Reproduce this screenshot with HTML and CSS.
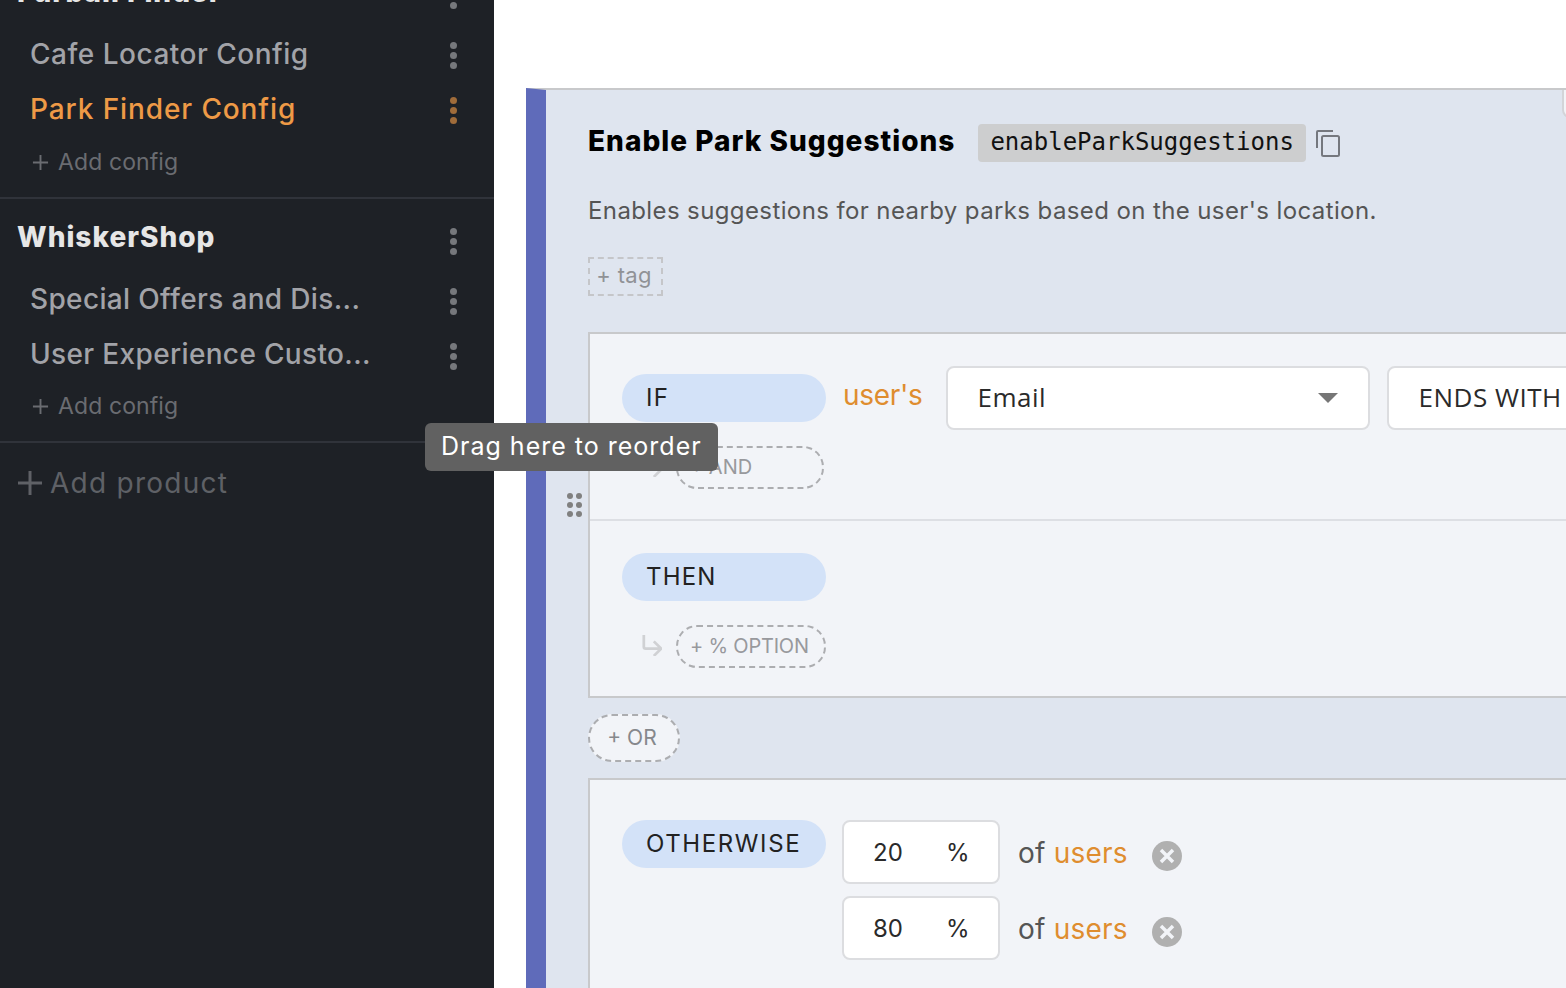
FILE: index.html
```html
<!DOCTYPE html>
<html lang="en">
<head>
<meta charset="utf-8">
<title>Enable Park Suggestions</title>
<link rel="stylesheet" href="styles.css">
</head>
<body>
<div class="page">
  <aside class="sidebar">
    <section class="product">
      <div class="product-head"><h2 class="product-name">Furball Finder</h2><span class="kebab"><i></i><i></i><i></i></span></div>
      <div class="config"><span class="config-name">Cafe Locator Config</span><span class="kebab"><i></i><i></i><i></i></span></div>
      <div class="config active"><span class="config-name">Park Finder Config</span><span class="kebab"><i></i><i></i><i></i></span></div>
      <div class="add-config"><svg class="plus-sm" viewBox="0 0 18 18"><path d="M9 1v16M1 9h16"/></svg>Add config</div>
    </section>
    <section class="product">
      <div class="product-head"><h2 class="product-name">WhiskerShop</h2><span class="kebab"><i></i><i></i><i></i></span></div>
      <div class="config tight"><span class="config-name">Special Offers and Dis...</span><span class="kebab"><i></i><i></i><i></i></span></div>
      <div class="config tight"><span class="config-name">User Experience Custo...</span><span class="kebab"><i></i><i></i><i></i></span></div>
      <div class="add-config"><svg class="plus-sm" viewBox="0 0 18 18"><path d="M9 1v16M1 9h16"/></svg>Add config</div>
    </section>
    <div class="add-product"><svg class="plus-lg" viewBox="0 0 24 24"><path d="M12 0v24M0 12h24"/></svg>Add product</div>
  </aside>
  <main class="main">
    <article class="card">
      <div class="card-body">
        <header class="title-row">
          <h1 class="title">Enable Park Suggestions</h1>
          <code class="key">enableParkSuggestions</code>
          <svg class="copy" viewBox="0 0 24 27"><path d="M1 18V2a1 1 0 0 1 1-1h15"/><rect x="6" y="6" width="17" height="20" rx="1.500"/></svg>
        </header>
        <p class="desc">Enables suggestions for nearby parks based on the user's location.</p>
        <div class="tag">+ tag</div>
        <div class="rule-box">
          <div class="rule-part if-part">
            <div class="rule-line">
              <span class="pill">IF</span>
              <span class="users">user's</span>
              <div class="field attr"><span class="field-text">Email</span><span class="caret"></span></div>
              <div class="field op"><span class="field-text">ENDS WITH</span></div>
            </div>
            <div class="sub-line"><svg class="arrow" viewBox="0 0 22 24"><path d="M2 1v13a2 2 0 0 0 2 2h16M13 8l8 8-8 8"/></svg><span class="dash-pill and">+ AND</span></div>
          </div>
          <div class="rule-part then-part">
            <span class="pill">THEN</span>
            <div class="sub-line"><svg class="arrow" viewBox="0 0 22 24"><path d="M2 1v13a2 2 0 0 0 2 2h16M13 8l8 8-8 8"/></svg><span class="dash-pill option">+ % OPTION</span></div>
          </div>
        </div>
        <div class="or-row"><span class="dash-pill or">+ OR</span></div>
        <div class="rule-box otherwise">
          <span class="pill wide">OTHERWISE</span>
          <div class="split">
            <div class="split-row">
              <div class="field pct"><span class="num">20</span><span>%</span></div>
              <span class="of">of <em>users</em></span>
              <svg class="remove" viewBox="0 0 30 30"><circle cx="15" cy="15" r="15"/><path d="M9 9l12 12M21 9L9 21"/></svg>
            </div>
            <div class="split-row">
              <div class="field pct"><span class="num">80</span><span>%</span></div>
              <span class="of">of <em>users</em></span>
              <svg class="remove" viewBox="0 0 30 30"><circle cx="15" cy="15" r="15"/><path d="M9 9l12 12M21 9L9 21"/></svg>
            </div>
          </div>
        </div>
      </div>
      <span class="corner"></span>
    </article>
    <span class="grip"><i></i><i></i><i></i><i></i><i></i><i></i></span>
  </main>
  <div class="tooltip">Drag here to reorder</div>
</div>
</body>
</html>
```
FILE: styles.css
```css
* { box-sizing: border-box; }
html, body { margin: 0; padding: 0; }
body { background: #fff; font-family: Inter, "Noto Sans", sans-serif; overflow: hidden; }
.page { position: relative; display: flex; width: 1566px; height: 988px; overflow: hidden; }

.sidebar { width: 494px; flex: none; background: #1e2126; color: #a2a3a8; margin-top: -24px; height: 1012px; }
.product { border-bottom: 2px solid #30333a; padding: 0 0 15px; }
.product-head { display: flex; justify-content: space-between; align-items: center; height: 38px; padding: 0 37px 0 17px; }
.product-name { margin: 0; padding-bottom: 8px; font-size: 28px; line-height: 38px; font-weight: 800; color: #e6e6e6; letter-spacing: 1px; white-space: nowrap; }
.product:first-child .product-name { padding-bottom: 6px; }
.product + .product .product-head { margin-top: 23px; }
.config { display: flex; justify-content: space-between; align-items: center; height: 55px; padding: 0 37px 0 30px; font-size: 28px; font-weight: 500; letter-spacing: .5px; }
.config-name { padding-bottom: 4px; }
.config.tight { letter-spacing: .35px; }
.config.tight .config-name { padding-bottom: 6px; }
.product-head + .config { margin-top: 14px; }
.config.active { color: #ee9a46; letter-spacing: .9px; }
.config.active .kebab i { background: #a06c3a; }
.kebab { display: flex; flex-direction: column; gap: 3px; flex: none; }
.kebab i { display: block; width: 7px; height: 7px; border-radius: 50%; background: #76787c; }
.add-config { display: flex; align-items: center; gap: 9px; height: 40px; padding-left: 32px; font-size: 23px; letter-spacing: .1px; color: #6a6c71; margin-top: 4px; }
.product + .product .add-config { margin-top: 2px; }
.plus-sm { width: 17px; height: 17px; fill: none; stroke: #6a6c71; stroke-width: 2; }
.add-product { display: flex; align-items: center; gap: 8px; padding: 23px 0 0 18px; font-size: 28px; letter-spacing: 1.25px; color: #5f6166; }
.plus-lg { width: 24px; height: 24px; fill: none; stroke: #5f6166; stroke-width: 3; }

.main { flex: 1; min-width: 0; position: relative; padding: 88px 0 0 32px; }
.card { position: relative; width: 1100px; height: 1000px; background: #dfe5ef; border-top: 2px solid #c8c9cb; border-left: 20px solid #5f6bba; }
.card-body { padding: 34px 0 0 42px; }
.corner { position: absolute; top: 0; left: 1016px; width: 24px; height: 28px; background: #f2f4f8; border: 2px solid #d3d4d8; border-top: 0; border-radius: 0 0 0 8px; }
.title-row { display: flex; align-items: center; height: 38px; }
.title { margin: 0; padding-bottom: 4px; font-size: 28px; line-height: 38px; font-weight: 800; color: #000; letter-spacing: 1.02px; white-space: nowrap; }
.key { margin-left: 23px; padding: 0 12px; height: 38px; line-height: 36px; background: #cdcecf; border-radius: 4px; font-family: "DejaVu Sans Mono", monospace; font-size: 24px; color: #111; }
.copy { width: 24px; height: 27px; margin: 0 0 0 10px; fill: none; stroke: #75787e; stroke-width: 2; }
.desc { margin: 30px 0 0; font-size: 24px; line-height: 38px; letter-spacing: .39px; color: #555; }
.tag { margin-top: 27px; width: 75px; height: 39px; padding-right: 3px; line-height: 33px; text-align: center; border: 2px dashed #c5c6c9; font-size: 22px; letter-spacing: .3px; color: #909296; }

.rule-box { width: 1010px; margin-top: 36px; background: #f2f4f8; border: 2px solid #c8c9cb; border-right: 0; }
.rule-part { padding-left: 32px; }
.if-part { height: 187px; padding-top: 40px; border-bottom: 2px solid #dddfe4; }
.then-part { height: 175px; padding-top: 32px; }
.rule-line { display: flex; align-items: flex-start; }
.pill { display: block; width: 204px; height: 48px; line-height: 48px; padding-left: 24px; background: #d3e2f8; border-radius: 24px; font-size: 24px; color: #222; letter-spacing: 1.2px; flex: none; }
.pill.wide { letter-spacing: 1.6px; }
.users { margin: -3px 0 0 17px; font-size: 28px; line-height: 48px; letter-spacing: -.3px; color: #df8d2f; }
.field { display: flex; align-items: center; background: #fff; border: 2px solid #dcdde0; border-radius: 8px; font-size: 24px; color: #2a2a2a; flex: none; }
.attr { width: 424px; height: 64px; margin: -8px 0 0 23px; padding: 0 30px 0 30px; justify-content: space-between; font-family: "Open Sans", sans-serif; font-size: 26px; letter-spacing: .5px; }
.op { width: 300px; height: 64px; margin: -8px 0 0 17px; padding-left: 30px; font-family: "Open Sans", sans-serif; font-size: 26px; letter-spacing: .5px; white-space: nowrap; }
.field-text { padding-bottom: 2px; }
.caret { width: 0; height: 0; border-left: 10px solid transparent; border-right: 10px solid transparent; border-top: 10px solid #767676; }
.sub-line { display: flex; align-items: center; gap: 14px; margin: 24px 0 0 20px; }
.if-part .sub-line { margin-top: 16px; }
.arrow { width: 20px; height: 22px; margin-bottom: 4px; fill: none; stroke: #d0d1d4; stroke-width: 3; flex: none; }
.dash-pill { display: inline-block; padding-left: 12px; border: 2px dashed #acadb0; border-radius: 21px; height: 43px; line-height: 39px; font-size: 20px; color: #98999d; white-space: nowrap; }
.and { width: 148px; }
.option { width: 150px; letter-spacing: -.2px; }
.or-row { height: 80px; padding-top: 16px; }
.or { width: 92px; height: 48px; padding: 0 4px 0 0; text-align: center; line-height: 44px; font-size: 21px; border-radius: 24px; background: #f2f4f8; color: #86888c; }
.otherwise { display: flex; align-items: flex-start; gap: 16px; margin-top: 0; padding: 40px 0 0 32px; height: 400px; }
.split { display: flex; flex-direction: column; gap: 12px; }
.split-row { display: flex; align-items: center; }
.pct { width: 158px; height: 64px; padding-left: 29px; }
.num { width: 73px; }
.of { margin: 2px 0 0 18px; font-size: 28px; letter-spacing: .2px; color: #555; width: 134px; }
.of em { font-style: normal; color: #df8d2f; }
.remove { width: 30px; height: 30px; margin-top: 8px; }
.remove circle { fill: #b0b0b0; }
.remove path { fill: none; stroke: #f2f4f8; stroke-width: 3.500; }

.grip { position: absolute; left: 73px; top: 493px; display: grid; grid-template-columns: 6px 6px; gap: 3px; }
.grip i { width: 6px; height: 6px; border-radius: 50%; background: #808080; }
.tooltip { position: absolute; left: 425px; top: 423px; height: 48px; padding: 0 16px; line-height: 47px; background: #616161; border-radius: 6px; color: #fff; font-size: 25px; letter-spacing: 1px; white-space: nowrap; }
```
